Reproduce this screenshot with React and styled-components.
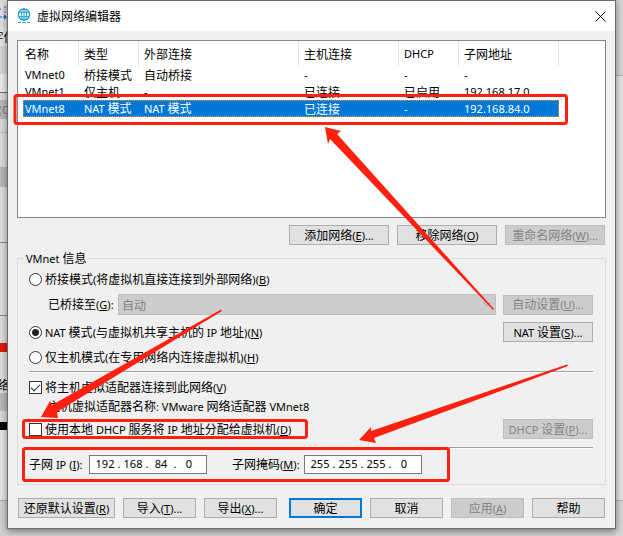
import React from "react";
import styled, { createGlobalStyle } from "styled-components";

const GlobalStyle = createGlobalStyle`
  * {
    box-sizing: border-box;
  }
  body {
    margin: 0;
    background-color: #e2e2e2;
    color: #000000;
    font-family: "Noto Sans CJK SC", sans-serif;
    font-size: 12px;
    line-height: 16px;
    overflow: hidden;
  }
  button, input, select {
    font: inherit;
    color: inherit;
  }
`;

const networks = [
  ["VMnet0", "桥接模式", "自动桥接", "-", "-", "-"],
  ["VMnet1", "仅主机", "-", "已连接", "已启用", "192.168.17.0"],
  ["VMnet8", "NAT 模式", "NAT 模式", "已连接", "-", "192.168.84.0"],
];

const headers = ["名称", "类型", "外部连接", "主机连接", "DHCP", "子网地址"];

// Latin runs use the smaller UI font, Chinese stays at the base size
function Text({ children, hotkey, after = "" }) {
  const parts = children.split(/([\x20-\x7e]+)/);
  return (
    <span>
      {parts.map((part, i) => (i % 2 ? <Latin key={i}>{part}</Latin> : part))}
      {hotkey && (
        <Latin>
          (<Hotkey>{hotkey}</Hotkey>){after}
        </Latin>
      )}
    </span>
  );
}

function IpAddress({ id, value }) {
  return (
    <IpBox>
      {value.split(".").map((octet, i) => (
        <React.Fragment key={i}>
          {i > 0 && <Dot>.</Dot>}
          <Octet
            id={i === 0 ? id : undefined}
            aria-label={i === 0 ? undefined : `${id} ${i + 1}`}
            defaultValue={octet}
            maxLength={3}
          />
        </React.Fragment>
      ))}
    </IpBox>
  );
}

function GlobeIcon() {
  return (
    <svg width="14" height="16" viewBox="0 0 14 16" fill="none" stroke="#1c9cc9" aria-hidden="true">
      <circle cx="7" cy="6.5" r="5.6" strokeWidth="1.3" />
      <ellipse cx="7" cy="6.5" rx="2.6" ry="5.6" />
      <path d="M7 1v12M1.8 4.3h10.4M1.8 8.7h10.4" />
      <path d="M1 14.5h3M5.5 14.5h3M10 14.5h3" stroke="#1fae9f" />
    </svg>
  );
}

function App() {
  return (
    <Page>
      <GlobalStyle />
      <LeftStrip aria-hidden="true">
        <Strip $h={27} $bg="#dedede">
          <svg width="7" height="27" fill="none" stroke="#2f62d9">
            <path d="M0 9h1M5 6v4M5 11v3M0 17h4" strokeDasharray="2 1" />
            <path d="M4 14l3 3-3 3z" fill="#2f62d9" stroke="none" />
          </svg>
        </Strip>
        <Strip $h={19} $bg="#e6e6e6">
          <Behind>字优</Behind>
        </Strip>
        <Strip $h={28} $bg="#d6d6d6" />
        <Strip $h={18} $bg="#e8e8e8" />
        <Strip $h={8} $bg="#d9d9d9" $line="#6f6f6f" />
        <Strip $h={19} $bg="#b9b9b9" $color="#777777">
          <Behind>
            <Latin>(C</Latin>
          </Behind>
        </Strip>
        <Strip $h={13} $bg="#d9d9d9" />
        <Strip $h={35} $bg="#dcdcdc" $line="#c4c4c4" />
        <Strip $h={20} $bg="#b9b9b9" />
        <Strip $h={55} $bg="#dedede" />
        <Strip $h={73} $bg="#dedede" $line="#8a8a8a" />
        <Strip $h={28} $bg="#dcdcdc" $line="#8a8a8a" />
        <Strip $h={9} $bg="#e2190c" />
        <Strip $h={25} $bg="#dcdcdc" />
        <Strip $h={16} $bg="#dcdcdc">
          <Behind>络</Behind>
        </Strip>
        <Strip $h={18} $bg="#b9b9b9" />
        <Strip $h={11} $bg="#d9d9d9" />
        <Strip $h={8} $bg="#000000" />
        <Strip $h={70} $bg="#e4e4e4" />
        <Strip $h={36} $bg="#d0d0d0" $line="#a8a8a8" />
      </LeftStrip>

      <Dialog>
        <TitleBar>
          <GlobeIcon />
          <Title>虚拟网络编辑器</Title>
          <CloseButton aria-label="关闭">
            <svg width="11" height="11" viewBox="0 0 11 11" stroke="#000000" strokeWidth="1">
              <path d="M0.5 0.5l10 10M10.5 0.5l-10 10" />
            </svg>
          </CloseButton>
        </TitleBar>

        <Body>
          <ListView>
            <NetworkTable>
              <colgroup>
                <Col $w={56} />
                <Col $w={60} />
                <Col $w={160} />
                <Col $w={100} />
                <Col $w={60} />
                <Col $w={100} />
              </colgroup>
              <thead>
                <tr>
                  {headers.map((header) => (
                    <HeadCell key={header}>
                      <Text>{header}</Text>
                    </HeadCell>
                  ))}
                </tr>
              </thead>
              <tbody>
                {networks.map((row) => (
                  <NetworkRow key={row[0]} $selected={row[0] === "VMnet8"}>
                    {row.map((cell, i) => (
                      <Cell key={i}>
                        <Text>{cell}</Text>
                      </Cell>
                    ))}
                  </NetworkRow>
                ))}
              </tbody>
            </NetworkTable>
          </ListView>

          <ListActions>
            <Button $w={100}>
              <Text hotkey="E" after="...">添加网络</Text>
            </Button>
            <Button $w={100}>
              <Text hotkey="O">移除网络</Text>
            </Button>
            <Button $w={100} disabled>
              <Text hotkey="W" after="...">重命名网络</Text>
            </Button>
          </ListActions>

          <Group>
            <Legend>
              <Text>VMnet 信息</Text>
            </Legend>
            <Row $h={26}>
              <Option>
                <Radio type="radio" name="mode" />
                <Text hotkey="B">桥接模式(将虚拟机直接连接到外部网络)</Text>
              </Option>
            </Row>
            <Row $h={25} $indent>
              <BridgeLabel htmlFor="bridge">
                <Text hotkey="G" after=":">已桥接至</Text>
              </BridgeLabel>
              <SelectWrap>
                <Select id="bridge" disabled>
                  <option>自动</option>
                </Select>
                <Chevron width="8" height="5" viewBox="0 0 8 5" fill="none" stroke="#9a9a9a">
                  <path d="M0.5 0.5L4 4L7.5 0.5" />
                </Chevron>
              </SelectWrap>
              <Button $w={90} disabled>
                <Text hotkey="U" after="...">自动设置</Text>
              </Button>
            </Row>
            <Row $h={30}>
              <Option>
                <Radio type="radio" name="mode" defaultChecked />
                <Text hotkey="N">NAT 模式(与虚拟机共享主机的 IP 地址)</Text>
              </Option>
              <Button $w={90}>
                <Text hotkey="S" after="...">NAT 设置</Text>
              </Button>
            </Row>
            <Row $h={20}>
              <Option>
                <Radio type="radio" name="mode" />
                <Text hotkey="H">仅主机模式(在专用网络内连接虚拟机)</Text>
              </Option>
            </Row>
            <Separator />
            <Row $h={20}>
              <Option>
                <Checkbox type="checkbox" defaultChecked />
                <Text hotkey="V">将主机虚拟适配器连接到此网络</Text>
              </Option>
            </Row>
            <Row $h={18} $indent>
              <Text>主机虚拟适配器名称: VMware 网络适配器 VMnet8</Text>
            </Row>
            <Row $h={28}>
              <Option>
                <Checkbox type="checkbox" />
                <Text hotkey="D">使用本地 DHCP 服务将 IP 地址分配给虚拟机</Text>
              </Option>
              <Button $w={90} disabled>
                <Text hotkey="P" after="...">DHCP 设置</Text>
              </Button>
            </Row>
            <Separator />
            <Row $h={22}>
              <IpLabel htmlFor="subnet-ip" $w={60}>
                <Text hotkey="I" after=":">子网 IP </Text>
              </IpLabel>
              <IpAddress id="subnet-ip" value="192.168.84.0" />
              <MaskLabel htmlFor="subnet-mask" $w={72}>
                <Text hotkey="M" after=":">子网掩码</Text>
              </MaskLabel>
              <IpAddress id="subnet-mask" value="255.255.255.0" />
            </Row>
          </Group>

          <Footer>
            <Button $w={97}>
              <Text hotkey="R">还原默认设置</Text>
            </Button>
            <Button $w={73}>
              <Text hotkey="T" after="...">导入</Text>
            </Button>
            <Button $w={73}>
              <Text hotkey="X" after="...">导出</Text>
            </Button>
            <FooterEnd>
              <Button $w={73} $primary>确定</Button>
              <Button $w={73}>取消</Button>
              <Button $w={73} disabled>
                <Text hotkey="A">应用</Text>
              </Button>
              <Button $w={73}>帮助</Button>
            </FooterEnd>
          </Footer>
        </Body>
      </Dialog>

      <RightStrip aria-hidden="true">
        <Strip $h={75} $bg="#d6d5d3" />
        <Strip $h={425} $bg="#e4e4e4" $line="#b0b0b0" />
        <Strip $h={36} $bg="#d6d5d3" $line="#b0b0b0" />
      </RightStrip>

      <Annotations width="623" height="536" viewBox="0 0 623 536" aria-hidden="true">
        <g fill="none" stroke="#ff2010" strokeWidth="3">
          <rect x="15" y="95.5" width="551.5" height="28" rx="2" />
          <rect x="23.5" y="420.5" width="283" height="17" rx="2" />
          <rect x="23.5" y="448.5" width="425" height="32" rx="2" />
        </g>
        <g fill="#ff2010">
          <path d="M325 127L341 131L337 134L494 309L493 310L330 139L328 144Z" />
          <path d="M41 417L50 401L52 405L221 309.5L222 311L57 412L58 418Z" />
          <path d="M359 440L371 427L371 431L567 364.5L568 366L374 438L376 443Z" />
        </g>
      </Annotations>
    </Page>
  );
}

const Page = styled.div`
  position: relative;
  display: grid;
  grid-template-columns: 7px 1fr 7px;
  align-items: start;
  background-color: #d0d0d0;
`;

const LeftStrip = styled.div`
  display: flex;
  flex-direction: column;
  min-width: 0;
`;

const RightStrip = styled(LeftStrip)``;

const Strip = styled.div`
  display: flex;
  flex-shrink: 0;
  align-items: center;
  justify-content: center;
  height: ${(p) => p.$h}px;
  background-color: ${(p) => p.$bg};
  border-top: ${(p) => (p.$line ? `1px solid ${p.$line}` : "none")};
  color: ${(p) => p.$color || "#000000"};
`;

const Behind = styled.span`
  white-space: nowrap;
`;

const Dialog = styled.main`
  display: flex;
  flex-direction: column;
  min-width: 0;
  border: 1px solid #6b6b6b;
  background-color: #f0f0f0;
  box-shadow: 0 2px 7px rgba(0, 0, 0, 0.45);
  z-index: 1;
`;

const TitleBar = styled.header`
  display: flex;
  align-items: center;
  gap: 6px;
  height: 30px;
  padding: 0 9px;
  background-color: #ffffff;
`;

const Title = styled.h1`
  flex: 1;
  margin: 0;
  font-size: 12px;
  font-weight: 400;
`;

const CloseButton = styled.button`
  display: flex;
  padding: 0;
  border: none;
  background: none;
`;

const Body = styled.div`
  display: flex;
  flex-direction: column;
  padding: 9px 9px 10px;
`;

const ListView = styled.div`
  min-height: 178px;
  padding-left: 5px;
  border: 1px solid #828790;
  background-color: #ffffff;
  overflow: hidden;
`;

const NetworkTable = styled.table`
  width: 536px;
  table-layout: fixed;
  border-collapse: separate;
  border-spacing: 0;
`;

const Col = styled.col`
  width: ${(p) => p.$w}px;
`;

const HeadCell = styled.th`
  height: 25px;
  padding: 0 0 0 5px;
  border-right: 1px solid #e5e5e5;
  font-weight: 400;
  text-align: left;
  white-space: nowrap;

  &:first-child {
    padding-left: 2px;
  }
`;

const Cell = styled.td`
  height: 17px;
  padding: 0 0 0 5px;
  line-height: 14px;
  white-space: nowrap;

  &:first-child {
    padding-left: 2px;
  }
`;

const NetworkRow = styled.tr`
  color: ${(p) => (p.$selected ? "#ffffff" : "#000000")};
  background-color: ${(p) => (p.$selected ? "#0078d7" : "transparent")};
  outline: ${(p) => (p.$selected ? "1px dotted #ff8728" : "none")};
  outline-offset: -1px;
`;

const ListActions = styled.div`
  display: flex;
  justify-content: flex-end;
  gap: 8px;
  padding: 7px 1px 5px 0;
`;

const Button = styled.button`
  flex-shrink: 0;
  width: ${(p) => p.$w}px;
  height: 20px;
  padding: 0;
  border: ${(p) => (p.$primary ? "2px solid #0078d7" : "1px solid #adadad")};
  background-color: #e1e1e1;
  line-height: 16px;
  white-space: nowrap;

  &:disabled {
    border-color: #bfbfbf;
    background-color: #cccccc;
    color: #838383;
  }
`;

const Group = styled.fieldset`
  min-width: 0;
  margin: 0;
  padding: 0 12px 9px 11px;
  border: 1px solid #dcdcdc;
`;

const Legend = styled.legend`
  height: 16px;
  margin-left: -5px;
  padding: 0 2px;
`;

const Row = styled.div`
  display: flex;
  align-items: center;
  justify-content: flex-start;
  height: ${(p) => p.$h}px;
  padding-left: ${(p) => (p.$indent ? 19 : 0)}px;
  white-space: nowrap;
`;

const Option = styled.label`
  display: flex;
  flex: 1;
  align-items: center;
  gap: 3px;
`;

const Radio = styled.input`
  appearance: none;
  width: 13px;
  height: 13px;
  margin: 0;
  border: 1px solid #333333;
  border-radius: 50%;
  background-color: #ffffff;

  &:checked {
    background-image: radial-gradient(circle, #222222 3px, #ffffff 4px);
  }
`;

const Checkbox = styled.input`
  appearance: none;
  width: 13px;
  height: 13px;
  margin: 0;
  border: 1px solid #333333;
  background-color: #ffffff;

  &:checked::before {
    content: "";
    display: block;
    width: 8px;
    height: 4px;
    margin: 2px 1px;
    border-left: 1px solid #222222;
    border-bottom: 1px solid #222222;
    transform: rotate(-45deg);
  }
`;

const BridgeLabel = styled.label`
  width: 70px;
`;

const SelectWrap = styled.div`
  position: relative;
  display: flex;
  flex: 1;
  margin-right: 7px;
`;

const Select = styled.select`
  appearance: none;
  width: 100%;
  height: 21px;
  padding: 0 3px;
  border: 1px solid #bfbfbf;
  border-radius: 0;
  background-color: #cccccc;
  color: #838383;
  opacity: 1;
`;

const Chevron = styled.svg`
  position: absolute;
  top: 8px;
  right: 5px;
`;

const Separator = styled.hr`
  height: 2px;
  margin: 4px 0;
  border: none;
  border-top: 1px solid #a0a0a0;
  background-color: #ffffff;
`;

const IpLabel = styled.label`
  width: ${(p) => p.$w}px;
`;

const MaskLabel = styled(IpLabel)`
  margin-left: 25px;
`;

const IpBox = styled.div`
  display: flex;
  align-items: center;
  width: 118px;
  height: 19px;
  padding: 0 3px;
  border: 1px solid #7a7a7a;
  background-color: #ffffff;
  font-family: "Noto Sans", sans-serif;
  font-size: 11px;
`;

const Octet = styled.input`
  width: 24px;
  padding: 0;
  border: none;
  background: none;
  text-align: center;
`;

const Dot = styled.span`
  width: 4px;
  text-align: center;
`;

const Footer = styled.footer`
  display: flex;
  gap: 8px;
  padding: 13px 1px 0;
`;

const FooterEnd = styled.div`
  display: flex;
  flex: 1;
  justify-content: flex-end;
  gap: 8px;
`;

const Latin = styled.span`
  font-family: "Noto Sans", sans-serif;
  font-size: 11px;
  white-space: pre;
`;

const Hotkey = styled.span`
  text-decoration: underline;
`;

const Annotations = styled.svg`
  position: absolute;
  top: 0;
  left: 0;
  z-index: 2;
  pointer-events: none;
`;

export default App;
